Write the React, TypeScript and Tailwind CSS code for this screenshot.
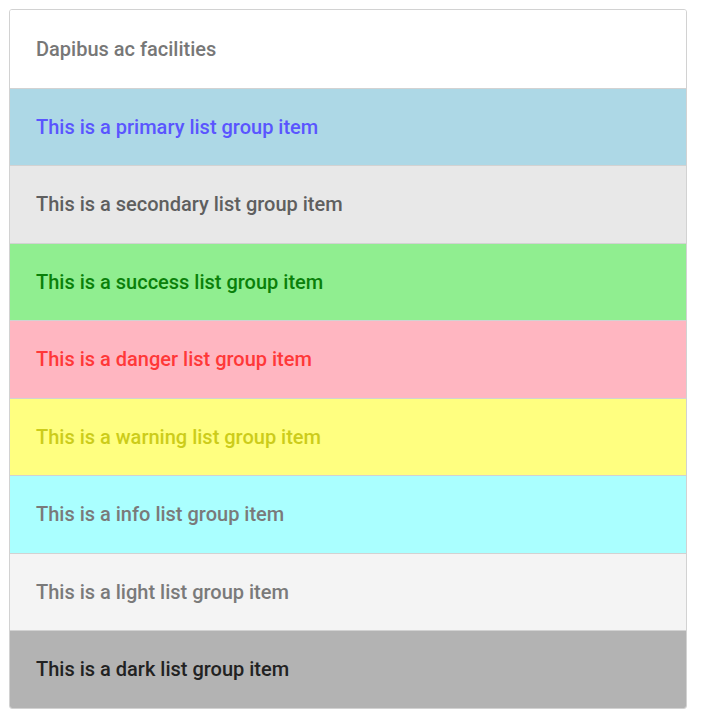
import React from 'react'

const items = [
  { label: 'Dapibus ac facilities', cls: 'bg-white text-[#777777]' },
  { label: 'This is a primary list group item', cls: 'bg-[#add8e6] text-[#5a55ff]' },
  { label: 'This is a secondary list group item', cls: 'bg-[#e8e8e8] text-[#5f5f5f]' },
  { label: 'This is a success list group item', cls: 'bg-[#90ee90] text-[#0a800a]' },
  { label: 'This is a danger list group item', cls: 'bg-[#ffb6c1] text-[#ff3838]' },
  { label: 'This is a warning list group item', cls: 'bg-[#ffff80] text-[#cccc1a]' },
  { label: 'This is a info list group item', cls: 'bg-[#aaffff] text-[#7a7a7a]' },
  { label: 'This is a light list group item', cls: 'bg-[#f4f4f4] text-[#7a7a7a]' },
  { label: 'This is a dark list group item', cls: 'bg-[#b3b3b3] text-[#222222]' },
]

export default function App() {
  return (
    <div className="p-[9px] pr-[14px] font-['Roboto',sans-serif]">
      <ul className="rounded-[3px] border border-[#d2d2d2] overflow-hidden">
        {items.map((item, i) => (
          <li
            key={i}
            className={`h-[77.5px] flex items-center pl-[26px] text-[20px] font-medium ${
              i > 0 ? 'border-t border-[#d2d2d2]' : ''
            } ${item.cls}`}
          >
            {item.label}
          </li>
        ))}
      </ul>
    </div>
  )
}
